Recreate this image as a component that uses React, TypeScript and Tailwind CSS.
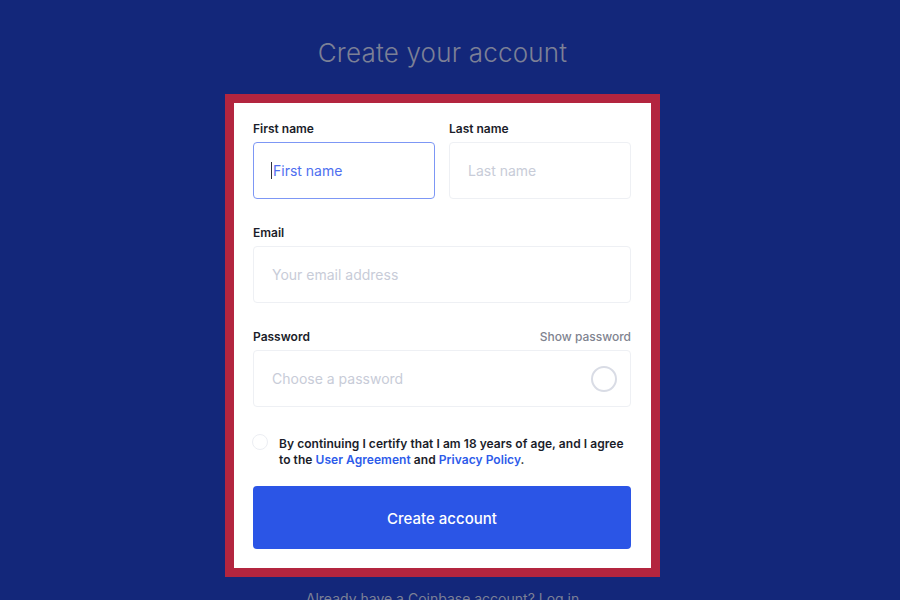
import React from "react";

export default function App() {
  return (
    <div
      className="w-[900px] h-[600px] overflow-hidden bg-[#13277a] flex flex-col"
      style={{ fontFamily: "Inter, 'Noto Sans', sans-serif" }}
    >
      <div className="ml-[225px] w-[435px] flex flex-col items-center pt-[37px]">
        <h1 className="text-[26px] leading-[32px] font-light text-[#7c8096] tracking-[0.2px]">
          Create your account
        </h1>
        <div className="mt-[25px] w-full border-[9px] border-[#b3253f] bg-white pl-[19px] pr-[20px] pt-[18px] pb-[19px] flex flex-col">
          <div className="flex gap-[14px]">
            <div className="flex-1 flex flex-col">
              <label className="text-[12px] leading-[16px] font-semibold text-[#1b1d2a]">First name</label>
              <div className="mt-[5px] h-[57px] rounded-[4px] border border-[#7d97f5] flex items-center pl-[17px]">
                <span className="w-[1px] h-[17px] bg-[#30323e] mr-[1px]" />
                <span className="text-[14px] text-[#4f6ff0]">First name</span>
              </div>
            </div>
            <div className="flex-1 flex flex-col">
              <label className="text-[12px] leading-[16px] font-semibold text-[#1b1d2a]">Last name</label>
              <div className="mt-[5px] h-[57px] rounded-[4px] border border-[#eef0f4] flex items-center pl-[18px]">
                <span className="text-[14px] text-[#c8ccd8]">Last name</span>
              </div>
            </div>
          </div>

          <label className="mt-[26px] text-[12px] leading-[16px] font-semibold text-[#1b1d2a]">Email</label>
          <div className="mt-[5px] h-[57px] rounded-[4px] border border-[#eef0f4] flex items-center pl-[18px]">
            <span className="text-[14px] text-[#c8ccd8]">Your email address</span>
          </div>

          <div className="mt-[26px] flex justify-between items-center">
            <label className="text-[12px] leading-[16px] font-semibold text-[#1b1d2a]">Password</label>
            <span className="text-[12px] leading-[16px] font-medium text-[#80838f]">Show password</span>
          </div>
          <div className="mt-[5px] h-[57px] rounded-[4px] border border-[#eef0f4] flex items-center justify-between pl-[18px] pr-[13px]">
            <span className="text-[14px] text-[#c8ccd8]">Choose a password</span>
            <span className="w-[26px] h-[26px] rounded-full border-2 border-[#d9dce5]" />
          </div>

          <div className="mt-[29px] flex items-start">
            <span className="mt-[-2px] w-[16px] h-[16px] rounded-full border border-[#eceef3] shrink-0 ml-[-1px]" />
            <p className="ml-[11px] text-[12px] leading-[16px] font-semibold text-[#1b1d2a] tracking-[0.05px]">
              By continuing I certify that I am 18 years of age, and I agree to the{" "}
              <span className="text-[#2d5bea]">User Agreement</span> and{" "}
              <span className="text-[#2d5bea]">Privacy Policy</span>.
            </p>
          </div>

          <button className="mt-[18px] h-[63px] w-full rounded-[4px] bg-[#2b55e6] text-white text-[15px] font-medium pt-[3px]">
            Create account
          </button>
        </div>
        <p className="mt-[12px] text-[14px] leading-[20px] text-[#7c8096]">
          Already have a Coinbase account? Log in
        </p>
      </div>
    </div>
  );
}
